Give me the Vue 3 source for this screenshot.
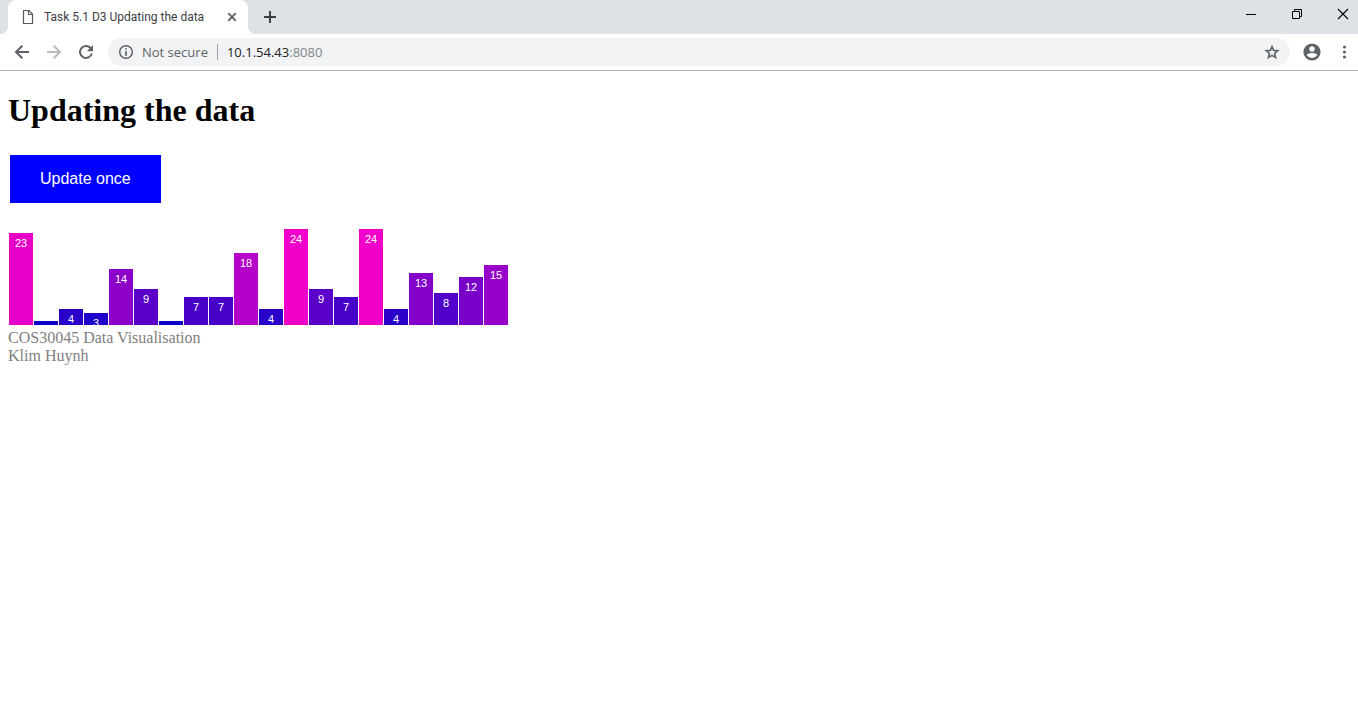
<script setup>
import { ref } from 'vue'

const address = ref('10.1.54.43:8080')
const values = ref([23, 1, 4, 3, 14, 9, 1, 7, 7, 18, 4, 24, 9, 7, 24, 4, 13, 8, 12, 15])
const chartHeight = 100
const step = 25
const unit = 4

function update() {
  values.value = values.value.map(() => 1 + Math.floor(Math.random() * 24))
}
</script>

<template>
  <div class="browser">
    <header class="tabstrip">
      <div class="tab">
        <svg class="file" width="16" height="16" viewBox="0 0 16 16" aria-hidden="true">
          <path d="M3.5 1.500H9L12.500 5v9.500h-9z M8.500 1.500V5.500H12.500" fill="none" stroke="#5a5a5a" stroke-width="1.200" />
        </svg>
        <span class="title">Task 5.1 D3 Updating the data</span>
        <button class="icon close" aria-label="Close tab">
          <svg width="16" height="16" viewBox="0 0 16 16"><path d="M4.200 4.200l7.600 7.600M11.800 4.200l-7.600 7.600" stroke="#5f6368" stroke-width="1.900" /></svg>
        </button>
      </div>
      <button class="icon plus" aria-label="New tab">
        <svg width="16" height="16" viewBox="0 0 16 16"><path d="M8 2v12M2 8h12" stroke="#3c4043" stroke-width="2" /></svg>
      </button>
      <div class="window-controls">
        <button class="icon" aria-label="Minimise">
          <svg width="12" height="12" viewBox="0 0 12 12"><path d="M1 6.500h10" stroke="#000" /></svg>
        </button>
        <button class="icon" aria-label="Restore">
          <svg width="12" height="12" viewBox="0 0 12 12"><path d="M1.500 3.500h7v7h-7zM3.500 3.500v-2h7v7h-2" fill="none" stroke="#000" /></svg>
        </button>
        <button class="icon" aria-label="Close window">
          <svg width="12" height="12" viewBox="0 0 12 12"><path d="M1 1l10 10M11 1L1 11" stroke="#000" stroke-width="1.100" /></svg>
        </button>
      </div>
    </header>

    <nav class="toolbar">
      <button class="icon nav" aria-label="Back">
        <svg width="16" height="16" viewBox="0 0 16 16"><path d="M15 8H2.500M8.300 1.700L2 8l6.300 6.300" fill="none" stroke="#5f6368" stroke-width="2" /></svg>
      </button>
      <button class="icon nav" aria-label="Forward">
        <svg width="16" height="16" viewBox="0 0 16 16"><path d="M1 8h12.500M7.700 1.700L14 8l-6.300 6.300" fill="none" stroke="#bababa" stroke-width="2" /></svg>
      </button>
      <button class="icon nav" aria-label="Reload">
        <svg width="16" height="16" viewBox="0 0 16 16">
          <path d="M13.800 9.500A6 6 0 1 1 12.500 4" fill="none" stroke="#5f6368" stroke-width="2" />
          <path d="M15 1v6.200H8.800z" fill="#5f6368" />
        </svg>
      </button>
      <div class="omnibox">
        <svg width="16" height="16" viewBox="0 0 16 16" aria-hidden="true">
          <circle cx="8" cy="8" r="6.300" fill="none" stroke="#5f6368" stroke-width="1.500" />
          <path d="M8 7v5M8 4.200v1.600" stroke="#5f6368" stroke-width="1.600" />
        </svg>
        <span class="insecure">Not secure</span>
        <span class="rule"></span>
        <a class="url" :href="'#' + address">{{ address.split(':')[0] }}<span>:{{ address.split(':')[1] }}</span></a>
        <button class="icon star" aria-label="Bookmark this page">
          <svg width="16" height="16" viewBox="0 0 16 16"><path d="M8 2.500l1.600 3.900 4.200.3-3.200 2.800 1 4.100L8 11.400l-3.600 2.200 1-4.100-3.200-2.800 4.200-.3z" fill="none" stroke="#5f6368" stroke-width="1.600" /></svg>
        </button>
      </div>
      <button class="icon profile" aria-label="Profile">
        <svg width="18" height="18" viewBox="0 0 18 18">
          <circle cx="9" cy="9" r="8.600" fill="#5f6368" />
          <circle cx="9" cy="6" r="2.700" fill="#fff" />
          <path d="M3.800 12.300C4 10.400 7.300 9.900 9 9.900s5 .5 5.200 2.400A6.200 6.200 0 0 1 9 15a6.200 6.200 0 0 1-5.200-2.700z" fill="#fff" />
        </svg>
      </button>
      <button class="icon menu" aria-label="Menu">
        <svg width="16" height="16" viewBox="0 0 16 16" fill="#5f6368"><circle cx="8.500" cy="3" r="1.600" /><circle cx="8.500" cy="8" r="1.600" /><circle cx="8.500" cy="13" r="1.600" /></svg>
      </button>
    </nav>

    <main class="page">
      <h1>Updating the data</h1>
      <button class="update" @click="update">Update once</button>
      <svg class="chart" width="500" :height="chartHeight" role="img" aria-label="Bar chart">
        <g v-for="(v, i) in values" :key="i">
          <rect :x="i * step + 1" :y="chartHeight - v * unit" width="24" :height="v * unit" :fill="`rgb(${v * 10}, 0, 200)`" />
          <text v-if="v > 2" :x="i * step + 13" :y="chartHeight - v * unit + 14">{{ v }}</text>
        </g>
      </svg>
      <footer>COS30045 Data Visualisation<br />Klim Huynh</footer>
    </main>
  </div>
</template>

<style>
body {
  background: #fff;
}
</style>

<style scoped>
.browser {
  font-family: "Open Sans", "Noto Sans", sans-serif;
}
.icon {
  display: flex;
  align-items: center;
  justify-content: center;
  flex: none;
  padding: 0;
  border: 0;
  background: none;
}
svg {
  display: block;
  flex: none;
}
.tabstrip {
  display: flex;
  height: 34px;
  padding-left: 8px;
  background: #dee1e6;
}
.tab {
  position: relative;
  display: flex;
  align-items: center;
  box-sizing: border-box;
  width: 240px;
  padding: 0 8px 0 12px;
  background: #fff;
  border-radius: 8px 8px 0 0;
}
.tab::before,
.tab::after {
  content: "";
  position: absolute;
  bottom: 0;
  width: 8px;
  height: 8px;
}
.tab::before {
  left: -8px;
  background: radial-gradient(circle at 0 0, #dee1e6 8px, #fff 8px);
}
.tab::after {
  right: -8px;
  background: radial-gradient(circle at 100% 0, #dee1e6 8px, #fff 8px);
}
.title {
  flex: 1;
  margin-left: 8px;
  font-family: Roboto, sans-serif;
  font-size: 12px;
  line-height: 16px;
  color: #3c4043;
  white-space: nowrap;
}
.plus {
  width: 44px;
}
.window-controls {
  display: flex;
  align-items: center;
  gap: 34px;
  height: 28px;
  margin-left: auto;
  margin-right: 9px;
}
.toolbar {
  display: flex;
  align-items: center;
  height: 36px;
  padding-left: 6px;
  border-bottom: 1px solid #b6b4b6;
}
.nav {
  width: 32px;
}
.omnibox {
  display: flex;
  flex: 1;
  align-items: center;
  height: 28px;
  margin-left: 6px;
  padding: 0 10px;
  border-radius: 14px;
  background: #f1f3f4;
  font-size: 13px;
  line-height: 20px;
}
.insecure {
  margin-left: 8px;
  color: #5f6368;
}
.rule {
  width: 1px;
  height: 16px;
  margin: 0 9px;
  background: #9aa0a6;
}
.url {
  color: #202124;
  text-decoration: none;
}
.url span {
  color: #80868b;
}
.star {
  margin-left: auto;
}
.profile {
  width: 44px;
}
.menu {
  width: 20px;
  margin-right: 4px;
}
.page {
  padding: 21px 8px 8px;
  font-family: "Liberation Serif", serif;
}
h1 {
  margin: 0 0 26px;
  font-size: 32px;
  line-height: 37px;
}
.update {
  display: block;
  margin: 0 2px 22px;
  padding: 15px 30px;
  border: 0;
  background: #00f;
  color: #fff;
  font-family: "Liberation Sans", sans-serif;
  font-size: 16px;
  line-height: 18px;
}
.chart text {
  fill: #fff;
  font-family: "Liberation Sans", sans-serif;
  font-size: 11px;
  text-anchor: middle;
}
footer {
  margin-top: 4px;
  color: gray;
  font-size: 16px;
  line-height: 18px;
}
</style>
